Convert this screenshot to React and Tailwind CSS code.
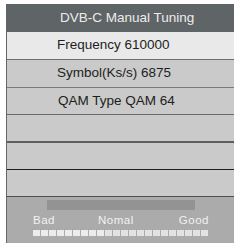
export default function App() {
  const squares = Array.from({ length: 22 }, (_, i) => i);
  return (
    <div
      className="w-[234px] h-[243px] bg-white pl-[6px] pt-[4px] overflow-hidden"
      style={{ fontFamily: '"Liberation Sans", Arial, sans-serif' }}
    >
      <div className="flex flex-col">
        <div className="h-[28px] bg-[#5f6466] text-[#ececec] text-[13.5px] flex items-center pl-[54px]">
          DVB-C Manual Tuning
        </div>
        <div className="border-l border-[#666]">
          <div className="h-[28px] bg-[#e9e9e9] border-b border-[#6f6f6f] text-[#1e1e1e] text-[13.5px] flex items-center pl-[50px]">
            Frequency 610000
          </div>
          <div className="h-[28px] bg-[#c9cac9] border-b border-[#7a7a7a] text-[#1e1e1e] text-[13.5px] flex items-center pl-[50px]">
            Symbol(Ks/s) 6875
          </div>
          <div className="h-[27px] bg-[#c9cac9] border-b border-[#6a6a6a] text-[#1e1e1e] text-[13.5px] flex items-center pl-[51px]">
            QAM Type QAM 64
          </div>
          <div className="h-[28px] bg-[#c9cac9] border-b-2 border-[#5e5e5e]" />
          <div className="h-[27px] bg-[#c9cac9] border-b border-[#1e1e1e]" />
          <div className="h-[27px] bg-[#c9cac9] border-b border-[#4e4e4e]" />
          <div className="h-[46px] bg-[#aaabaa] flex flex-col pt-[3px] pl-[26px]">
            <div className="ml-[14px] w-[148px] h-[10px] bg-[#939393]" />
            <div className="w-[176px] flex justify-between text-[11.5px] leading-[12px] text-[#f2f2f2] mt-[4px] tracking-[0.5px]">
              <span>Bad</span>
              <span className="-ml-[2px]">Nomal</span>
              <span>Good</span>
            </div>
            <div className="flex gap-[1px] mt-[4px]">
              {squares.map((i) => (
                <div
                  key={i}
                  className={`w-[7px] h-[6px] ${i < 9 ? 'bg-[#ececec]' : 'bg-[#e2e2e2]'}`}
                />
              ))}
            </div>
          </div>
        </div>
      </div>
    </div>
  );
}
